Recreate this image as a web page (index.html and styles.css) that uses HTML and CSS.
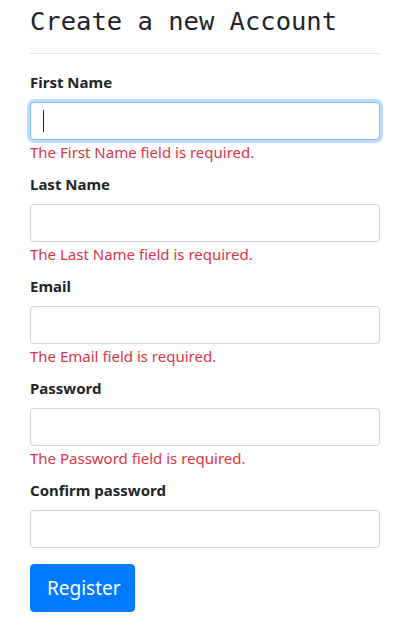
FILE: index.html
```html
<!DOCTYPE html>
<html>
<head>
<meta charset="utf-8">
<link rel="stylesheet" href="styles.css">
</head>
<body>
<div class="page">
  <h2 class="title">Create a new Account</h2>
  <hr class="rule">
  <form class="form">
    <div class="group">
      <label class="label">First Name</label>
      <div class="field-wrap">
        <input class="input input-focus" type="text">
        <span class="caret"></span>
      </div>
      <span class="error">The First Name field is required.</span>
    </div>
    <div class="group">
      <label class="label">Last Name</label>
      <input class="input" type="text">
      <span class="error">The Last Name field is required.</span>
    </div>
    <div class="group">
      <label class="label">Email</label>
      <input class="input" type="text">
      <span class="error">The Email field is required.</span>
    </div>
    <div class="group">
      <label class="label">Password</label>
      <input class="input" type="password">
      <span class="error">The Password field is required.</span>
    </div>
    <div class="group group-last">
      <label class="label">Confirm password</label>
      <input class="input" type="password">
    </div>
    <div class="actions">
      <button class="btn" type="button">Register</button>
    </div>
  </form>
</div>
</body>
</html>
```
FILE: styles.css
```css
* { box-sizing: border-box; }
html, body { margin: 0; padding: 0; background: #fff; }
body {
  font-family: "Noto Sans", "Open Sans", sans-serif;
  font-size: 15px;
  color: #212529;
}
.page {
  width: 350px;
  margin-left: 30px;
  padding-top: 1px;
}
.title {
  font-family: "DejaVu Sans Mono", "Liberation Mono", monospace;
  font-weight: normal;
  font-size: 25.5px;
  line-height: 30px;
  margin: 5px 0 0 0;
  color: #212529;
}
.rule {
  border: 0;
  border-top: 1px solid #e5e5e5;
  margin: 17px 0 16px 0;
}
.form { display: flex; flex-direction: column; }
.group {
  display: flex;
  flex-direction: column;
  margin-bottom: 8px;
}
.group-last { margin-bottom: 16px; }
.label {
  font-weight: 700;
  line-height: 24px;
  margin-bottom: 8px;
}
.field-wrap { position: relative; }
.input {
  display: block;
  width: 100%;
  height: 38px;
  padding: 6px 12px;
  font: inherit;
  border: 1px solid #ced4da;
  border-radius: 4px;
  background: #fff;
  outline: none;
}
.input-focus {
  border-color: #80bdff;
  box-shadow: 0 0 0 3px rgba(0,123,255,.25);
}
.caret {
  position: absolute;
  left: 13px;
  top: 8px;
  width: 1px;
  height: 22px;
  background: #222;
}
.error {
  color: #dc3545;
  line-height: 24px;
}
.actions { display: flex; }
.btn {
  font-family: inherit;
  font-size: 19px;
  line-height: 30px;
  padding: 8px 16px;
  color: #fff;
  background: #007bff;
  border: 1px solid #007bff;
  border-radius: 4px;
  width: 105px;
}
```
